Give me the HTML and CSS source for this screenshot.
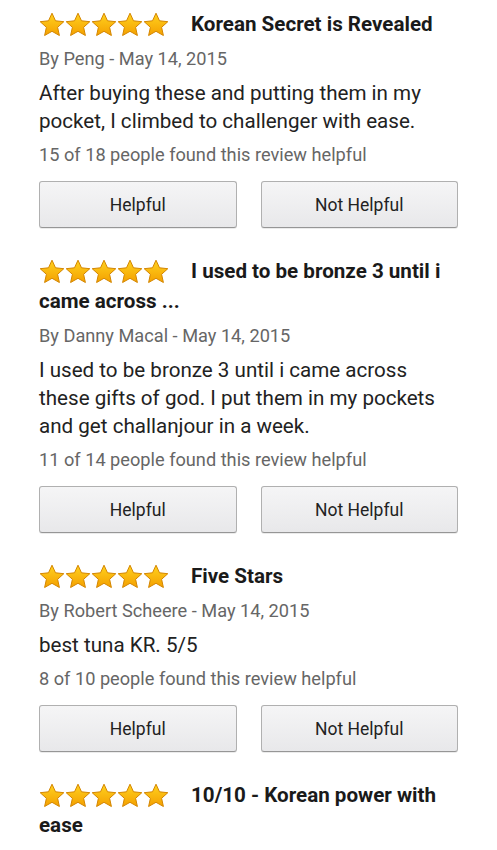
FILE: index.html
```html
<!DOCTYPE html>
<html>
<head>
<meta charset="utf-8">
<link rel="stylesheet" href="styles.css">
</head>
<body>
<svg width="0" height="0" class="defs">
  <defs>
    <linearGradient id="sg" x1="0" y1="0" x2="0" y2="1">
      <stop offset="0" stop-color="#ffd21f"/>
      <stop offset="1" stop-color="#f4a000"/>
    </linearGradient>
    <symbol id="star" viewBox="0 0 26 25">
      <path d="M13 1.2l3.5 7.6 8.3 0.9-6.2 5.6 1.8 8.2L13 19.3l-7.4 4.2 1.8-8.2-6.2-5.6 8.3-0.9z" fill="url(#sg)" stroke="#d48600" stroke-width="1" stroke-linejoin="round"/>
    </symbol>
  </defs>
</svg>
<div class="reviews">
  <div class="review">
    <h2 class="title"><span class="stars"><svg><use href="#star"/></svg><svg><use href="#star"/></svg><svg><use href="#star"/></svg><svg><use href="#star"/></svg><svg><use href="#star"/></svg></span>Korean Secret is Revealed</h2>
    <p class="meta">By Peng - May 14, 2015</p>
    <p class="body">After buying these and putting them in my pocket, I climbed to challenger with ease.</p>
    <p class="count">15 of 18 people found this review helpful</p>
    <div class="actions"><button class="btn">Helpful</button><button class="btn">Not Helpful</button></div>
  </div>
  <div class="review">
    <h2 class="title"><span class="stars"><svg><use href="#star"/></svg><svg><use href="#star"/></svg><svg><use href="#star"/></svg><svg><use href="#star"/></svg><svg><use href="#star"/></svg></span>I used to be bronze 3 until i came across ...</h2>
    <p class="meta">By Danny Macal - May 14, 2015</p>
    <p class="body">I used to be bronze 3 until i came across these gifts of god. I put them in my pockets and get challanjour in a week.</p>
    <p class="count">11 of 14 people found this review helpful</p>
    <div class="actions"><button class="btn">Helpful</button><button class="btn">Not Helpful</button></div>
  </div>
  <div class="review">
    <h2 class="title"><span class="stars"><svg><use href="#star"/></svg><svg><use href="#star"/></svg><svg><use href="#star"/></svg><svg><use href="#star"/></svg><svg><use href="#star"/></svg></span>Five Stars</h2>
    <p class="meta">By Robert Scheere - May 14, 2015</p>
    <p class="body">best tuna KR. 5/5</p>
    <p class="count">8 of 10 people found this review helpful</p>
    <div class="actions"><button class="btn">Helpful</button><button class="btn">Not Helpful</button></div>
  </div>
  <div class="review">
    <h2 class="title"><span class="stars"><svg><use href="#star"/></svg><svg><use href="#star"/></svg><svg><use href="#star"/></svg><svg><use href="#star"/></svg><svg><use href="#star"/></svg></span>10/10 - Korean power with ease</h2>
  </div>
</div>
</body>
</html>
```
FILE: styles.css
```css
html, body {
  margin: 0;
  padding: 0;
  background: #ffffff;
}
body {
  font-family: Roboto, "Noto Sans", sans-serif;
  color: #222222;
  width: 497px;
  overflow: hidden;
}
.defs {
  position: absolute;
  width: 0;
  height: 0;
}
.reviews {
  padding: 9px 39px 0 39px;
}
.review {
  margin-bottom: 28px;
}
.title {
  margin: 0;
  font-size: 20.6px;
  font-weight: 700;
  line-height: 30px;
  color: #1a1a1a;
}
.stars {
  display: inline-flex;
  gap: 0;
  vertical-align: -6px;
  margin-right: 22px;
}
.stars svg {
  width: 26px;
  height: 25px;
}
.meta {
  margin: 8px 0 0;
  font-size: 18.2px;
  line-height: 24px;
  color: #666666;
}
.body {
  margin: 8px 0 0;
  font-size: 20.6px;
  line-height: 28px;
  color: #222222;
}
.count {
  margin: 8px 0 0;
  font-size: 18.2px;
  line-height: 24px;
  color: #666666;
}
.actions {
  display: flex;
  gap: 24px;
  margin-top: 14px;
}
.btn {
  flex: 1;
  height: 47px;
  font-family: Roboto, "Noto Sans", sans-serif;
  font-size: 17.5px;
  color: #222222;
  background: linear-gradient(#f5f5f6, #e8e8ea);
  border: 1px solid #b0b0b0;
  border-bottom-color: #969696;
  border-radius: 3px;
  box-shadow: 0 1px 0 rgba(0,0,0,0.08);
  padding: 0;
}
```
